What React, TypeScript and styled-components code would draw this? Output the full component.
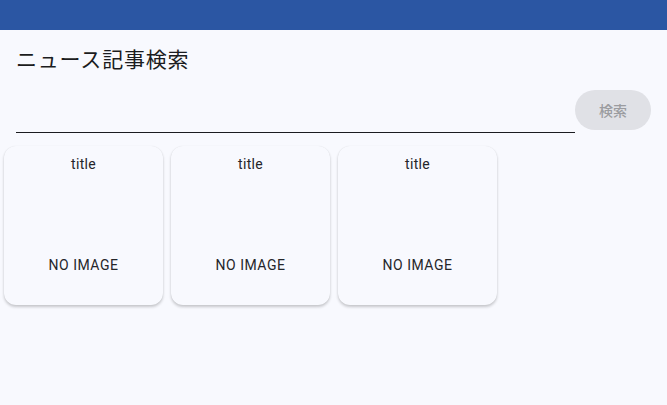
import { createGlobalStyle } from "styled-components";
import styled from "styled-components";

const GlobalStyle = createGlobalStyle`
  html, body {
    margin: 0;
    padding: 0;
    background: #f8f9fe;
    font-family: Roboto, "Noto Sans CJK JP", sans-serif;
    color: #1b1c20;
  }
`;

const Page = styled.div`
  width: 667px;
  min-height: 405px;
  background: #f8f9fe;
`;

const AppBar = styled.div`
  height: 30px;
  background: #2b56a3;
`;

const Heading = styled.h1`
  margin: 0;
  padding: 13px 16px 0;
  height: 32px;
  font-size: 21px;
  font-weight: 400;
  line-height: 30px;
  font-family: "Noto Sans CJK JP", sans-serif;
  color: #1b1c20;
  letter-spacing: 0.8px;
`;

const SearchRow = styled.div`
  display: flex;
  align-items: flex-start;
  padding: 0 16px;
  margin-top: 15px;
`;

const Field = styled.input`
  flex: 1;
  height: 43px;
  box-sizing: border-box;
  border: none;
  border-bottom: 1px solid #1b1c20;
  background: transparent;
  font-size: 16px;
  font-family: Roboto, sans-serif;
  outline: none;
  padding: 0;
`;

const SearchButton = styled.button`
  width: 76px;
  height: 40px;
  border: none;
  border-radius: 20px;
  background: #e0e1e6;
  color: #9b9ca0;
  font-size: 14px;
  font-weight: 500;
  font-family: "Noto Sans CJK JP", sans-serif;
  cursor: default;
`;

const Grid = styled.div`
  display: grid;
  grid-template-columns: repeat(3, 167px);
  margin-top: 13px;
`;

const Card = styled.div`
  margin: 0 4px;
  height: 159px;
  border-radius: 12px;
  background: #f8f9fe;
  box-shadow: 0 2px 3px rgba(0, 0, 0, 0.2), 0 0 1px rgba(0, 0, 0, 0.1);
  display: flex;
  flex-direction: column;
  align-items: center;
`;

const CardTitle = styled.div`
  margin-top: 9px;
  font-size: 14px;
  line-height: 18px;
  letter-spacing: 0.3px;
  color: #25262a;
`;

const NoImage = styled.div`
  margin-top: 83px;
  font-size: 14px;
  line-height: 18px;
  letter-spacing: 0.5px;
  color: #25262a;
`;

const articles = ["title", "title", "title"];

export default function App() {
  return (
    <Page>
      <GlobalStyle />
      <AppBar />
      <Heading>ニュース記事検索</Heading>
      <SearchRow>
        <Field />
        <SearchButton disabled>検索</SearchButton>
      </SearchRow>
      <Grid>
        {articles.map((t, i) => (
          <Card key={i}>
            <CardTitle>{t}</CardTitle>
            <NoImage>NO IMAGE</NoImage>
          </Card>
        ))}
      </Grid>
    </Page>
  );
}
